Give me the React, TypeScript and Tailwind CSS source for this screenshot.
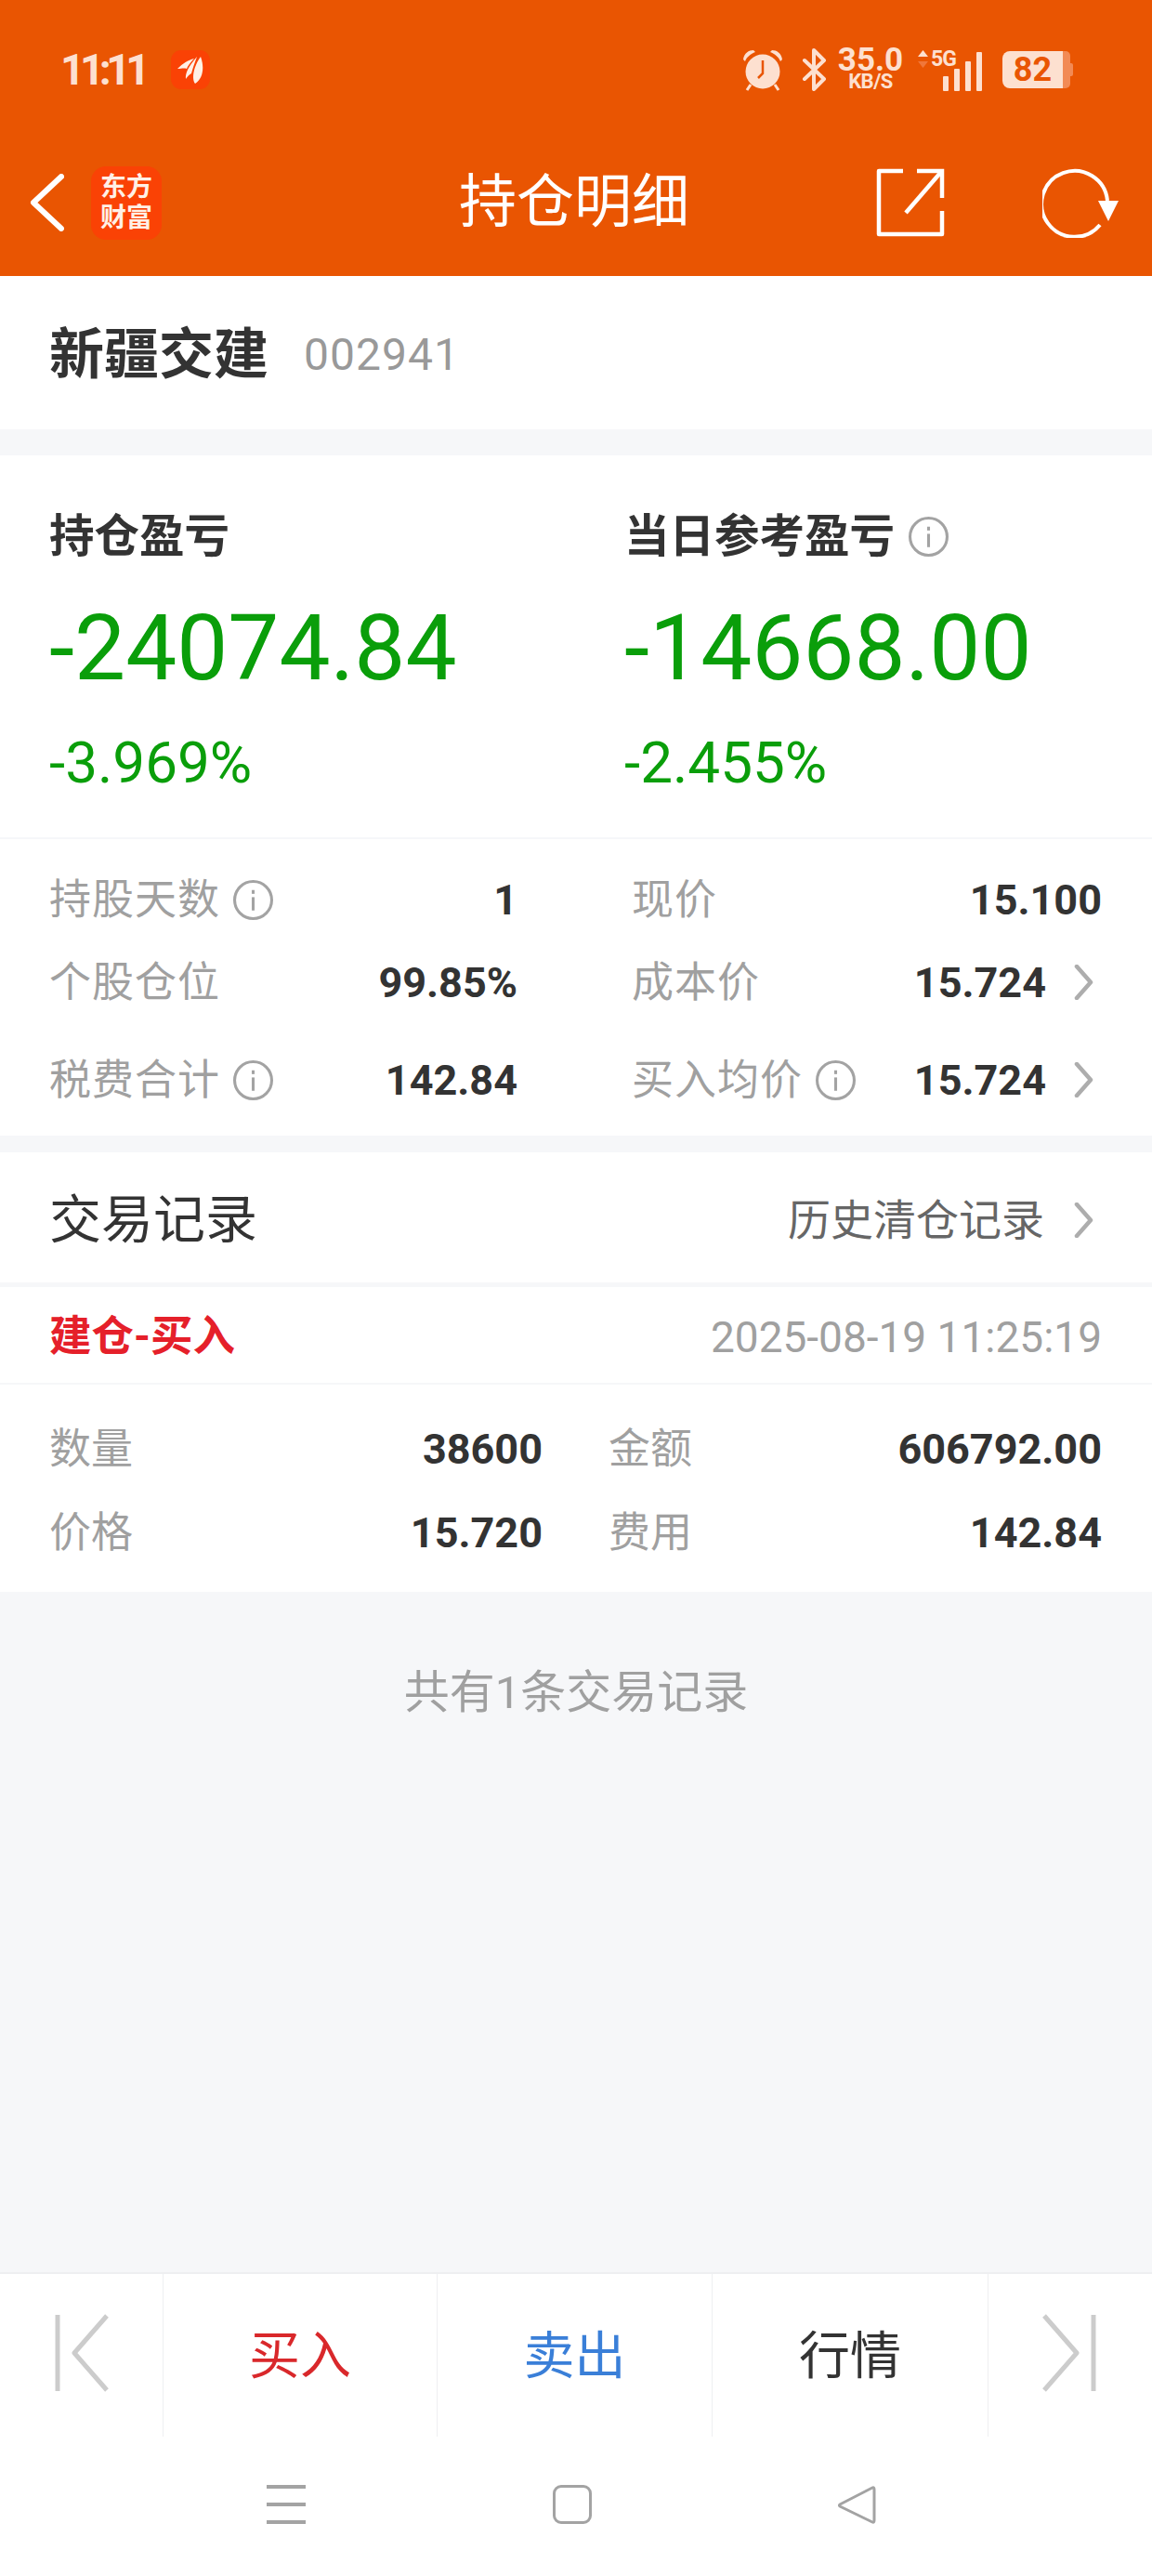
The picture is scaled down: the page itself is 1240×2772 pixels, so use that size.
const cjk = "font-['Roboto','Noto_Sans_CJK_SC',sans-serif]";

function Info() {
  return (
    <svg width="43" height="43" viewBox="0 0 42 42" fill="none" className="shrink-0">
      <circle cx="21" cy="21" r="19.5" stroke="#a3a3a3" strokeWidth="3" />
      <rect x="19.5" y="18" width="3" height="14" fill="#a3a3a3" />
      <rect x="19.5" y="10.5" width="3" height="4" fill="#a3a3a3" />
    </svg>
  );
}

function Chevron() {
  return (
    <svg width="22" height="38" viewBox="0 0 22 38" fill="none" className="shrink-0">
      <path d="M3 2 L18 19 L3 36" stroke="#adadad" strokeWidth="4.5" strokeLinecap="round" strokeLinejoin="round" />
    </svg>
  );
}

function Stat({ label, value, info, more, w }: { label: string; value: string; info?: boolean; more?: boolean; w: string }) {
  return (
    <div className={`flex items-center ${w}`}>
      <span className="text-[45px] leading-[60px] text-[#a0a0a0] tracking-[1px]">{label}</span>
      {info && <span className="mb-[2px] ml-[14px] flex"><Info /></span>}
      <span className="ml-auto text-[45px] leading-[60px] font-bold text-[#333333]">{value}</span>
      {more && <span className="mb-[3px] ml-[30px] mr-[8px] flex"><Chevron /></span>}
    </div>
  );
}

function Trade({ label, value, w }: { label: string; value: string; w: string }) {
  return (
    <div className={`flex items-center ${w}`}>
      <span className="text-[45px] leading-[60px] text-[#a0a0a0]">{label}</span>
      <span className="ml-auto text-[45px] leading-[60px] font-bold text-[#333333]">{value}</span>
    </div>
  );
}

function StatusBar() {
  return (
    <div className="mt-[37px] flex h-[75px] items-center pl-[65px] pr-[85px] text-[#fde0d0]">
      <span className="text-[46px] font-bold leading-none tracking-[-5.5px]">11:11</span>
      <span className="ml-[28px] flex h-[42px] w-[42px] items-center justify-center rounded-[11px] bg-[#fa4205]">
        <svg width="28" height="30" viewBox="0 0 28 30" fill="#fff0e6">
          <path d="M0 14 C6 8 11 5 18 3 C14 7 11 11 10 14 C7 13 4 14 0 14Z" />
          <path d="M9 25 C8 19 12 11 21 1 C18 9 16 15 15 19 C13 20 11 22 9 25Z" />
          <path d="M19 30 C15 25 17 12 25 1 C29 12 28 24 19 30Z" />
        </svg>
      </span>
      <div className="ml-auto flex items-center">
        <svg width="44" height="46" viewBox="0 0 44 46" fill="#fde0d0">
          <circle cx="22" cy="25" r="18.5" />
          <path d="M1 12 C2 5 7 2 12 2 L14 4 C9 6 5 9 3 14Z" />
          <path d="M43 12 C42 5 37 2 32 2 L30 4 C35 6 39 9 41 14Z" />
          <path d="M9 39 L5 45 M35 39 L39 45" stroke="#fde0d0" strokeWidth="3" />
          <path d="M22 13 V27 L17 32" stroke="#e95502" strokeWidth="2.5" fill="none" />
        </svg>
        <svg width="28" height="46" viewBox="0 0 28 46" fill="none" className="ml-[20px]">
          <path d="M3 13 L24 33 L13 44 V2 L24 13 L3 33" stroke="#fde0d0" strokeWidth="4" strokeLinejoin="round" strokeLinecap="round" />
        </svg>
        <div className="ml-[11px] flex w-[70px] flex-col items-center font-bold">
          <span className="text-[35px] leading-[27px]">35.0</span>
          <span className="text-[22px] leading-[20px] tracking-[-0.5px]">KB/S</span>
        </div>
        <div className="relative ml-[15px] h-[46px] w-[70px]">
          <svg width="13" height="20" viewBox="0 0 13 20" className="absolute left-0 top-[2px]">
            <path d="M6.5 0 L12 7 H1Z" fill="#fde0d0" />
            <path d="M6.5 19 L12 12 H1Z" fill="#f0773a" />
          </svg>
          <span className="absolute left-[15px] top-[0px] text-[23px] font-bold leading-[24px] tracking-[-1px]">5G</span>
          <div className="absolute bottom-0 right-0 flex items-end gap-[6px]">
            <span className="h-[16px] w-[6px] rounded-[1px] bg-[#fde0d0]" />
            <span className="h-[24px] w-[6px] rounded-[1px] bg-[#fde0d0]" />
            <span className="h-[32px] w-[6px] rounded-[1px] bg-[#fde0d0]" />
            <span className="h-[42px] w-[6px] rounded-[1px] bg-[#fde0d0]" />
          </div>
        </div>
        <div className="ml-[22px] flex items-center">
          <div className="flex h-[40px] w-[65px] items-center justify-center rounded-l-[8px] bg-[#fde0d0] text-[36px] font-bold leading-none text-[#e95502]">82</div>
          <div className="h-[40px] w-[8px] rounded-r-[5px] bg-[#f28a55]" />
          <div className="h-[14px] w-[3px] rounded-r-[2px] bg-[#f28a55]" />
        </div>
      </div>
    </div>
  );
}

function TitleBar() {
  return (
    <div className="relative mt-[51px] flex h-[110px] items-center pl-[32px] pr-[36px]">
      <svg width="37" height="62" viewBox="0 0 37 62" fill="none">
        <path d="M34 3 L4 31 L34 59" stroke="#fff" strokeWidth="6" strokeLinecap="round" strokeLinejoin="round" />
      </svg>
      <div className="ml-[29px] flex h-[79px] w-[76px] flex-col items-center justify-center rounded-[16px] bg-[#fa4205] text-[28px] font-bold leading-[33px] text-[#fff0e6]">
        <span>东方</span>
        <span>财富</span>
      </div>
      <span className="absolute left-0 right-[4px] text-center text-[62px] leading-none text-white">持仓明细</span>
      <svg width="74" height="74" viewBox="0 0 74 74" fill="none" className="ml-auto">
        <path d="M29 3 H3 V71 H71 V46" stroke="#fff" strokeWidth="4.5" strokeLinejoin="round" />
        <path d="M44 3 H71 V32" stroke="#fff" strokeWidth="4.5" />
        <path d="M32 48 L70 4" stroke="#fff" strokeWidth="4.5" />
      </svg>
      <svg width="82" height="76" viewBox="0 0 82 76" fill="none" className="ml-[105px]">
        <path d="M62 62 A35.5 35.5 0 1 1 70 36" stroke="#fff" strokeWidth="4" />
        <path d="M60 36 H82 L71 58Z" fill="#fff" />
      </svg>
    </div>
  );
}

export default function App() {
  return (
    <div className={`flex h-[2772px] w-[1240px] flex-col overflow-hidden bg-[#f6f7f9] ${cjk}`}>
      <header className="h-[297px] shrink-0 overflow-hidden bg-[#e95502]">
        <StatusBar />
        <TitleBar />
      </header>

      <section className="flex h-[165px] items-center bg-white pl-[53px] pt-[4px]">
        <span className="text-[59px] font-bold leading-none text-[#333333]">新疆交建</span>
        <span className="ml-[38px] text-[48px] leading-none tracking-[1px] text-[#999999]">002941</span>
      </section>

      <section className="mt-[28px] h-[732px] bg-white">
        <div className="flex h-[413px] border-b-2 border-[#f6f7f9]">
          <div className="w-[620px] pl-[53px]">
            <div className="mt-[58px] h-[60px] text-[48.5px] font-bold leading-[60px] text-[#333333]">持仓盈亏</div>
            <div className="mt-[40px] text-[98px] leading-[100px] text-[#0a9e0a]">-24074.84</div>
            <div className="mt-[37px] text-[62px] leading-[72px] text-[#0a9e0a]">-3.969%</div>
          </div>
          <div className="w-[620px] pl-[52px]">
            <div className="mt-[58px] flex h-[60px] items-center text-[48.5px] font-bold leading-[60px] text-[#333333]">
              当日参考盈亏
              <span className="ml-[15px] mb-[2px] flex"><Info /></span>
            </div>
            <div className="mt-[40px] text-[98px] leading-[100px] text-[#0a9e0a]">-14668.00</div>
            <div className="mt-[37px] text-[62px] leading-[72px] text-[#0a9e0a]">-2.455%</div>
          </div>
        </div>
        <div className="flex flex-col pl-[53px] pr-[54px] pt-[36px]">
          <div className="flex h-[60px] justify-between">
            <Stat label="持股天数" value="1" info w="w-[504px]" />
            <Stat label="现价" value="15.100" w="w-[506px]" />
          </div>
          <div className="mt-[29px] flex h-[60px] justify-between">
            <Stat label="个股仓位" value="99.85%" w="w-[504px]" />
            <Stat label="成本价" value="15.724" more w="w-[506px]" />
          </div>
          <div className="mt-[45px] flex h-[60px] justify-between">
            <Stat label="税费合计" value="142.84" info w="w-[504px]" />
            <Stat label="买入均价" value="15.724" info more w="w-[506px]" />
          </div>
        </div>
      </section>

      <section className="mt-[18px] flex h-[140px] items-center bg-white pl-[53px] pr-[62px] pt-[5px]">
        <span className="text-[56px] leading-none text-[#333333]">交易记录</span>
        <span className="ml-auto text-[46px] leading-none text-[#666666]">历史清仓记录</span>
        <span className="ml-[32px] flex"><Chevron /></span>
      </section>

      <section className="mt-[5px] h-[328px] bg-white">
        <div className="flex h-[105px] items-center justify-between border-b-2 border-[#f6f7f9] pl-[53px] pr-[54px] pt-[5px]">
          <span className="text-[45.5px] font-bold leading-none text-[#e5202a]">建仓-买入</span>
          <span className="text-[46px] leading-none text-[#a0a0a0]">2025-08-19 11:25:19</span>
        </div>
        <div className="flex flex-col pl-[53px] pr-[54px] pt-[40px]">
          <div className="flex h-[60px] justify-between">
            <Trade label="数量" value="38600" w="w-[531px]" />
            <Trade label="金额" value="606792.00" w="w-[531px]" />
          </div>
          <div className="mt-[30px] flex h-[60px] justify-between">
            <Trade label="价格" value="15.720" w="w-[531px]" />
            <Trade label="费用" value="142.84" w="w-[531px]" />
          </div>
        </div>
      </section>

      <div className="flex-1 pt-[79px] text-center text-[49px] leading-[60px] text-[#a0a0a0]">共有1条交易记录</div>

      <nav className="flex h-[177px] shrink-0 border-t-2 border-[#eeeff1] bg-white text-[55px] leading-none">
        <div className="flex w-[176px] items-center justify-center border-r border-[#eeeff1] pb-[6px]">
          <svg width="58" height="84" viewBox="0 0 58 84" fill="none">
            <path d="M3 1 V83" stroke="#cccccc" strokeWidth="5" />
            <path d="M56 2 L21 42 L56 82" stroke="#cccccc" strokeWidth="5" strokeLinejoin="round" />
          </svg>
        </div>
        <div className="flex w-[295px] items-center justify-center border-r border-[#eeeff1] pt-[2px] text-[#d9282b]">买入</div>
        <div className="flex w-[296px] items-center justify-center border-r border-[#eeeff1] pt-[2px] text-[#3a7fd8]">卖出</div>
        <div className="flex w-[297px] items-center justify-center border-r border-[#eeeff1] pt-[2px] text-[#333333]">行情</div>
        <div className="flex flex-1 items-center justify-center pb-[6px] pr-[3px]">
          <svg width="58" height="84" viewBox="0 0 58 84" fill="none">
            <path d="M55 1 V83" stroke="#cccccc" strokeWidth="5" />
            <path d="M2 2 L37 42 L2 82" stroke="#cccccc" strokeWidth="5" strokeLinejoin="round" />
          </svg>
        </div>
      </nav>

      <div className="flex h-[150px] shrink-0 items-center bg-white pb-[4px] pl-[287px]">
        <div className="flex h-[42px] w-[42px] flex-col justify-between">
          <span className="h-[4px] bg-[#a3a3a3]" />
          <span className="h-[4px] bg-[#a3a3a3]" />
          <span className="h-[4px] bg-[#a3a3a3]" />
        </div>
        <div className="ml-[266px] h-[42px] w-[42px] rounded-[9px] border-[3px] border-[#a3a3a3]" />
        <svg width="42" height="42" viewBox="0 0 42 42" fill="none" className="ml-[264px]">
          <path d="M38 3 L3 21 Q2 22 3 23 L38 40 Q40 41 40 38 V5 Q40 2 38 3Z" stroke="#a3a3a3" strokeWidth="3" strokeLinejoin="round" />
        </svg>
      </div>
    </div>
  );
}
